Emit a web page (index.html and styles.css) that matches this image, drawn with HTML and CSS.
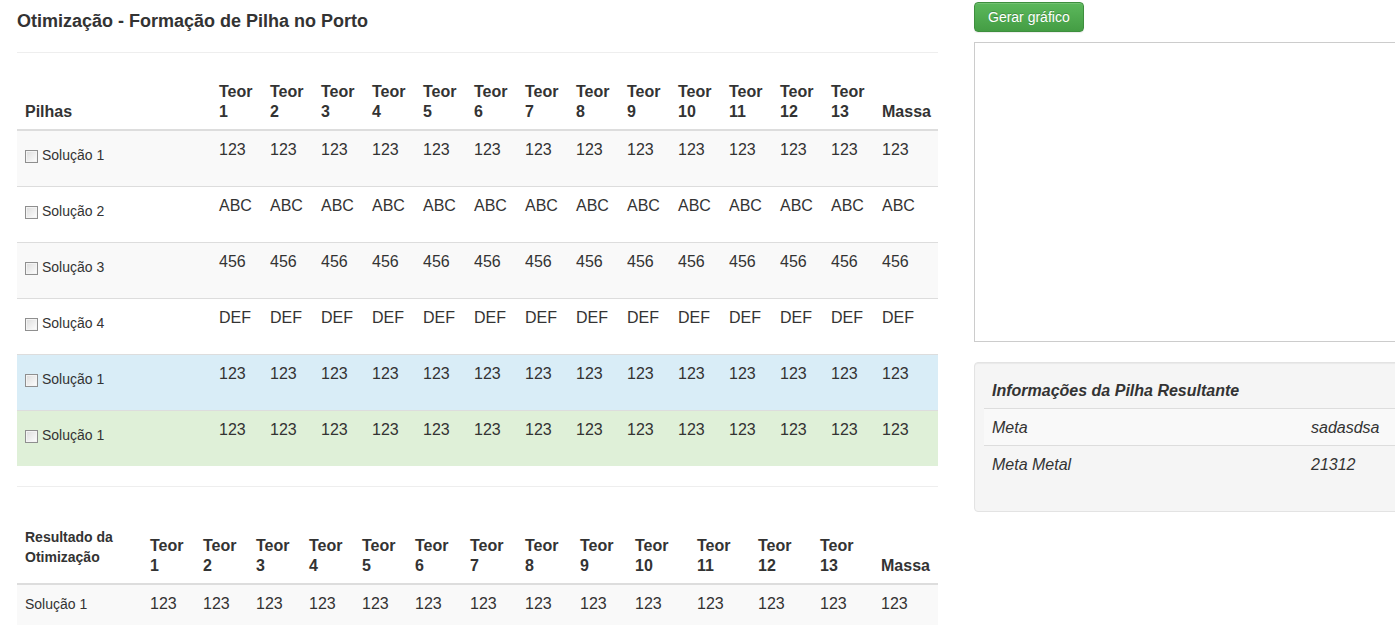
FILE: index.html
```html
<!DOCTYPE html>
<html lang="pt">
<head>
<meta charset="utf-8">
<title>Otimização - Formação de Pilha no Porto</title>
<link rel="stylesheet" href="styles.css">
</head>
<body>
<div class="page">
  <main class="main">
    <h4 class="title">Otimização - Formação de Pilha no Porto</h4>
    <hr class="sep">
    <table class="grid top">
      <colgroup>
        <col class="c-pilhas">
        <col class="c-t"><col class="c-t"><col class="c-t"><col class="c-t"><col class="c-t"><col class="c-t"><col class="c-t"><col class="c-t"><col class="c-t"><col class="c-t"><col class="c-t"><col class="c-t"><col class="c-t">
        <col class="c-massa">
      </colgroup>
      <thead>
        <tr>
          <th>Pilhas</th>
          <th>Teor<br>1</th><th>Teor<br>2</th><th>Teor<br>3</th><th>Teor<br>4</th><th>Teor<br>5</th><th>Teor<br>6</th><th>Teor<br>7</th><th>Teor<br>8</th><th>Teor<br>9</th><th>Teor<br>10</th><th>Teor<br>11</th><th>Teor<br>12</th><th>Teor<br>13</th>
          <th>Massa</th>
        </tr>
      </thead>
      <tbody>
        <tr class="striped">
          <td class="first"><label class="sol"><input type="checkbox" class="chk">Solução 1</label></td>
          <td>123</td><td>123</td><td>123</td><td>123</td><td>123</td><td>123</td><td>123</td><td>123</td><td>123</td><td>123</td><td>123</td><td>123</td><td>123</td><td>123</td>
        </tr>
        <tr>
          <td class="first"><label class="sol"><input type="checkbox" class="chk">Solução 2</label></td>
          <td>ABC</td><td>ABC</td><td>ABC</td><td>ABC</td><td>ABC</td><td>ABC</td><td>ABC</td><td>ABC</td><td>ABC</td><td>ABC</td><td>ABC</td><td>ABC</td><td>ABC</td><td>ABC</td>
        </tr>
        <tr class="striped">
          <td class="first"><label class="sol"><input type="checkbox" class="chk">Solução 3</label></td>
          <td>456</td><td>456</td><td>456</td><td>456</td><td>456</td><td>456</td><td>456</td><td>456</td><td>456</td><td>456</td><td>456</td><td>456</td><td>456</td><td>456</td>
        </tr>
        <tr>
          <td class="first"><label class="sol"><input type="checkbox" class="chk">Solução 4</label></td>
          <td>DEF</td><td>DEF</td><td>DEF</td><td>DEF</td><td>DEF</td><td>DEF</td><td>DEF</td><td>DEF</td><td>DEF</td><td>DEF</td><td>DEF</td><td>DEF</td><td>DEF</td><td>DEF</td>
        </tr>
        <tr class="info-row">
          <td class="first"><label class="sol"><input type="checkbox" class="chk">Solução 1</label></td>
          <td>123</td><td>123</td><td>123</td><td>123</td><td>123</td><td>123</td><td>123</td><td>123</td><td>123</td><td>123</td><td>123</td><td>123</td><td>123</td><td>123</td>
        </tr>
        <tr class="success-row">
          <td class="first"><label class="sol"><input type="checkbox" class="chk">Solução 1</label></td>
          <td>123</td><td>123</td><td>123</td><td>123</td><td>123</td><td>123</td><td>123</td><td>123</td><td>123</td><td>123</td><td>123</td><td>123</td><td>123</td><td>123</td>
        </tr>
      </tbody>
    </table>
    <hr class="sep">
    <table class="grid bottom">
      <colgroup>
        <col class="c-res">
        <col class="c-53"><col class="c-53"><col class="c-53"><col class="c-53"><col class="c-53">
        <col class="c-55"><col class="c-55"><col class="c-55"><col class="c-55">
        <col class="c-62"><col class="c-61"><col class="c-62"><col class="c-61">
        <col class="c-65">
      </colgroup>
      <thead>
        <tr>
          <th class="res-head">Resultado da<br>Otimização</th>
          <th>Teor<br>1</th><th>Teor<br>2</th><th>Teor<br>3</th><th>Teor<br>4</th><th>Teor<br>5</th><th>Teor<br>6</th><th>Teor<br>7</th><th>Teor<br>8</th><th>Teor<br>9</th><th>Teor<br>10</th><th>Teor<br>11</th><th>Teor<br>12</th><th>Teor<br>13</th>
          <th>Massa</th>
        </tr>
      </thead>
      <tbody>
        <tr class="striped">
          <td class="res-name">Solução 1</td>
          <td>123</td><td>123</td><td>123</td><td>123</td><td>123</td><td>123</td><td>123</td><td>123</td><td>123</td><td>123</td><td>123</td><td>123</td><td>123</td><td>123</td>
        </tr>
      </tbody>
    </table>
  </main>
  <aside class="side">
    <button type="button" class="btn-green">Gerar gráfico</button>
    <div class="chart"></div>
    <div class="well">
      <table class="info">
        <colgroup><col class="c-info1"><col class="c-info2"></colgroup>
        <thead>
          <tr><th colspan="2">Informações da Pilha Resultante</th></tr>
        </thead>
        <tbody>
          <tr class="striped"><td>Meta</td><td>sadasdsa</td></tr>
          <tr><td>Meta Metal</td><td>21312</td></tr>
        </tbody>
      </table>
    </div>
  </aside>
</div>
</body>
</html>
```

FILE: styles.css
```css
html, body {
  margin: 0;
  padding: 0;
  overflow: hidden;
  background: #fff;
}

body {
  font-family: "Liberation Sans", Arial, Helvetica, sans-serif;
  font-size: 14px;
  line-height: 20px;
  color: #333;
}

.page {
  display: flex;
  align-items: flex-start;
  gap: 36px;
  padding-left: 17px;
  width: 1500px;
}

.main {
  width: 921px;
  flex: none;
}

.title {
  margin: 11px 0 0;
  font-size: 18px;
  line-height: 21px;
  font-weight: bold;
  color: #333;
}

.sep {
  margin: 20px 0;
  border: 0;
  border-top: 1px solid #eee;
  height: 0;
}

.grid {
  width: 921px;
  table-layout: fixed;
  border-collapse: collapse;
  border-spacing: 0;
  margin-bottom: 20px;
}

.c-pilhas { width: 194px; }
.c-t { width: 51px; }
.c-massa { width: 64px; }

.c-res { width: 125px; }
.c-53 { width: 53px; }
.c-55 { width: 55px; }
.c-61 { width: 61px; }
.c-62 { width: 62px; }
.c-65 { width: 65px; }

.grid th {
  padding: 9px 8px 7px;
  text-align: left;
  vertical-align: bottom;
  font-size: 16px;
  line-height: 20px;
  font-weight: bold;
  border-bottom: 2px solid #ddd;
  white-space: nowrap;
}

.grid td {
  padding: 9px 8px 7px;
  vertical-align: top;
  font-size: 16px;
  line-height: 20px;
  border-top: 1px solid #ddd;
}

.grid tbody tr:first-child td {
  border-top: 0;
}

.striped td { background: #f9f9f9; }
.info-row td { background: #d9edf7; }
.success-row td { background: #dff0d8; }

.grid td.first {
  font-size: 14px;
}

.sol {
  display: flex;
  align-items: center;
  gap: 4px;
  margin-top: 5px;
  height: 20px;
  margin-bottom: 14px;
}

.chk {
  appearance: none;
  -webkit-appearance: none;
  margin: 2px 0 0;
  width: 13px;
  height: 13px;
  border: 1px solid #8f8f8f;
  background: linear-gradient(135deg, #dcdcdc 0%, #f4f4f4 70%, #fff 100%);
  box-shadow: inset 0 0 0 1px #f4f4f4;
  flex: none;
}

.grid th.res-head {
  font-size: 14px;
  line-height: 20px;
  padding-top: 20px;
  padding-bottom: 16px;
}

.grid td.res-name {
  font-size: 14px;
}

.bottom td {
  padding-bottom: 11px;
}

.side {
  width: 460px;
  flex: none;
  padding-top: 2px;
}

.btn-green {
  display: block;
  height: 30px;
  padding: 4px 13px;
  font-family: "Liberation Sans", Arial, sans-serif;
  font-size: 14px;
  line-height: 20px;
  color: #fff;
  text-shadow: 0 -1px 0 rgba(0, 0, 0, 0.2);
  background: linear-gradient(#5cb85c, #449d44);
  border: 1px solid #3e8f3e;
  border-radius: 4px;
  box-shadow: inset 0 1px 0 rgba(255, 255, 255, 0.15), 0 1px 1px rgba(0, 0, 0, 0.075);
  cursor: pointer;
}

.chart {
  margin-top: 10px;
  height: 298px;
  border: 1px solid #ccc;
}

.well {
  margin-top: 20px;
  padding: 9px;
  background: #f5f5f5;
  border: 1px solid #e3e3e3;
  border-radius: 4px;
  box-shadow: inset 0 1px 1px rgba(0, 0, 0, 0.05);
}

.info {
  width: 440px;
  table-layout: fixed;
  border-collapse: collapse;
  margin-bottom: 20px;
  font-size: 16px;
  line-height: 20px;
  font-style: italic;
}

.c-info1 { width: 319px; }
.c-info2 { width: 121px; }

.info th {
  text-align: left;
  padding: 9px 8px 7px;
  font-weight: bold;
  border-bottom: 1px solid #ddd;
}

.info td {
  padding: 9px 8px 7px;
  border-top: 1px solid #ddd;
}

.info tbody tr:first-child td {
  border-top: 0;
}
```
